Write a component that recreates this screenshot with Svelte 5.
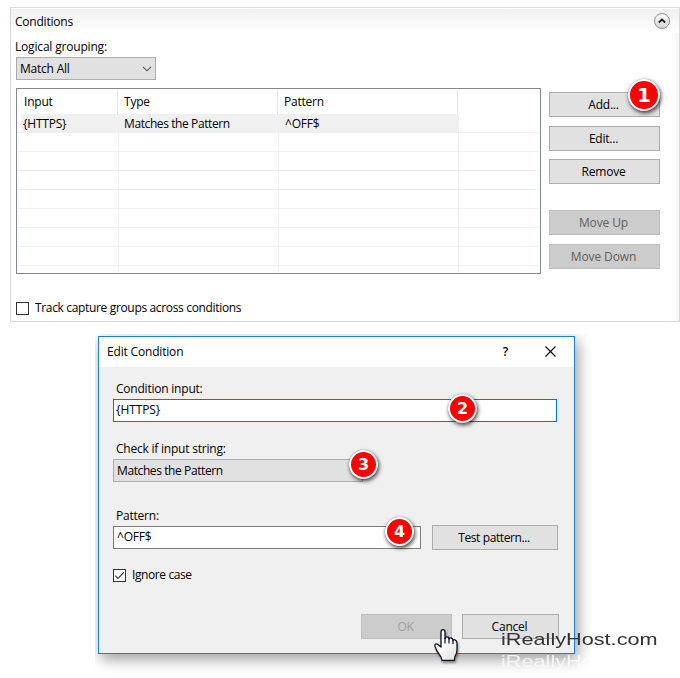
<script>
    // Column titles and rows of the conditions list
    const columns = ['Input', 'Type', 'Pattern', ''];
    const conditions = [
        { input: '{HTTPS}', type: 'Matches the Pattern', pattern: '^OFF$' }
    ];
    // Blank rows keep the grid lines going down to the end of the list
    const emptyRows = [1, 2, 3, 4, 5, 6, 7];

    let track = $state(false);
    let ignoreCase = $state(true);
    let conditionInput = $state('{HTTPS}');
    let pattern = $state('^OFF$');
</script>

<div class="page">
    <section class="panel">
        <header>
            <span>Conditions</span>
            <svg class="collapse" width="18" height="18" viewBox="0 0 18 18">
                <defs>
                    <linearGradient id="round" x1="0" y1="0" x2="0" y2="1">
                        <stop offset="0" stop-color="#fff" />
                        <stop offset="1" stop-color="#d4d4d4" />
                    </linearGradient>
                </defs>
                <circle cx="9" cy="9" r="7.5" fill="url(#round)" stroke="#929292" />
                <path d="M5.8 10.5 L9 7.5 L12.2 10.5" fill="none" stroke="#222" stroke-width="1.9" />
            </svg>
        </header>

        <div class="label grouping">Logical grouping:</div>
        <div class="select">
            <span>Match All</span>
            <svg width="10" height="6" viewBox="0 0 10 6">
                <path d="M1 .8 L5 4.8 L9 .8" fill="none" stroke="#555" stroke-width="1.1" />
            </svg>
        </div>

        <div class="columns">
            <div class="table">
                <div class="row head">
                    {#each columns as column}
                        <div>{column}</div>
                    {/each}
                </div>
                {#each conditions as condition}
                    <div class="row selected">
                        <div>{condition.input}</div>
                        <div class="tight">{condition.type}</div>
                        <div>{condition.pattern}</div>
                        <div></div>
                    </div>
                {/each}
                {#each emptyRows as row}
                    <div class="row"><div></div><div></div><div></div><div></div></div>
                {/each}
                <div class="row last"><div></div><div></div><div></div><div></div></div>
            </div>

            <div class="actions">
                <button>Add...<span class="badge big">1</span></button>
                <button class="edit">Edit...</button>
                <button class="remove">Remove</button>
                <button class="up" disabled>Move Up</button>
                <button class="down" disabled>Move Down</button>
            </div>
        </div>

        <label class="check track">
            <input type="checkbox" bind:checked={track} />
            <span class="box"></span>
            <span>Track capture groups across conditions</span>
        </label>
    </section>

    <div class="stage">
        <div class="dialog">
            <div class="titlebar">
                <span class="title">Edit Condition</span>
                <span class="help">?</span>
                <svg class="close" width="11" height="11" viewBox="0 0 11 11">
                    <path d="M.5 .5 L10.5 10.5 M10.5 .5 L.5 10.5" stroke="#000" stroke-width="1.1" />
                </svg>
            </div>

            <div class="form">
                <div class="label">Condition input:</div>
                <div class="field">
                    <input class="text focus" type="text" bind:value={conditionInput} />
                    <span class="badge two">2</span>
                </div>

                <div class="label second">Check if input string:</div>
                <div class="select matches">
                    <span class="tight">Matches the Pattern</span>
                    <span class="badge three">3</span>
                </div>

                <div class="label third">Pattern:</div>
                <div class="line">
                    <div class="field short">
                        <input class="text" type="text" bind:value={pattern} />
                        <span class="badge four">4</span>
                    </div>
                    <button class="test">Test pattern...</button>
                </div>

                <label class="check ignore">
                    <input type="checkbox" bind:checked={ignoreCase} />
                    <span class="box">
                        {#if ignoreCase}
                            <svg width="11" height="11" viewBox="0 0 11 11">
                                <path d="M1.2 5.6 L4 8.4 L9.8 2.3" fill="none" stroke="#444" stroke-width="1.3" />
                            </svg>
                        {/if}
                    </span>
                    <span>Ignore case</span>
                </label>

                <div class="footer">
                    <button class="ok" disabled>OK</button>
                    <button class="cancel">Cancel</button>
                </div>
            </div>
        </div>
    </div>

    <!-- Hand pointer over the OK button -->
    <svg class="pointer" width="30" height="38" viewBox="0 0 30 38">
        <defs>
            <linearGradient id="hand" x1="0" y1="0" x2="1" y2="1">
                <stop offset=".4" stop-color="#fff" />
                <stop offset="1" stop-color="#ddd" />
            </linearGradient>
        </defs>
        <path
            d="M8 19 V4 Q8 1.6 10 1.6 Q12 1.6 12 4 V10.5 Q12.4 8.6 14 8.8 Q16 9 16 11 Q16.6 9.6 18 10 Q20 10.4 20 12.4 Q20.8 11.2 22 11.8 Q24 12.6 24 15 V22 Q24 25 22.4 27.5 Q21.4 29 21.4 32.4 H9 Q9 29.6 6.2 26.4 Q3.4 22.8 2 18.4 Q1.4 15.8 3.4 15.8 Q5 15.8 6.4 17.8 Z"
            fill="url(#hand)" stroke="#0c1026" stroke-width="1.3" stroke-linejoin="round" />
        <path d="M12 10 V15.5 M16 10.5 V15.5 M20 12 V16" stroke="#0c1026" stroke-width="1.2" fill="none" />
    </svg>

    <div class="watermark">
        <div>iReallyHost.com</div>
        <div class="reflection">iReallyHost.com</div>
    </div>
</div>

<style>
    :global(body) {
        margin: 0;
        background: #fff;
    }

    .page, .page button, .page input {
        font-family: "Open Sans", "Noto Sans", sans-serif;
        font-size: 12px;
        letter-spacing: -0.22px;
        color: #000;
    }

    .page {
        position: relative;
        width: 680px;
        height: 678px;
        overflow: hidden;
        box-sizing: border-box;
        padding-top: 7px;
        line-height: 16px;
    }

    .page * {
        box-sizing: border-box;
    }

    .page .tight {
        letter-spacing: -0.4px;
    }

    .panel {
        margin-left: 10px;
        width: 670px;
        height: 315px;
        border: 1px solid #d9d9d9;
        padding: 1px 5px 0;
        background: #fff;
        box-shadow: inset 1px 1px 0 #fff, inset -9px 0 8px -7px #f0f0f0;
    }

    header {
        display: flex;
        justify-content: space-between;
        align-items: center;
        height: 24px;
        margin: 0 -5px;
        padding: 0 8px 0 4px;
        background: linear-gradient(#f0f0f0, #fff);
    }

    header span {
        padding-top: 2px;
    }

    .label {
        padding-left: 3px;
        height: 16px;
    }

    .grouping {
        padding-left: 0;
        margin: 6px 0 2px -1px;
        letter-spacing: -0.18px;
    }

    .select {
        display: flex;
        justify-content: space-between;
        align-items: center;
        width: 140px;
        height: 23px;
        padding: 0 3px;
        border: 1px solid #adadad;
        background: #e1e1e1;
        position: relative;
    }

    .columns {
        display: flex;
        gap: 8px;
        margin-top: 8px;
    }

    .table {
        width: 525px;
        height: 186px;
        border: 1px solid #828790;
        padding: 1px;
        overflow: hidden;
    }

    .row {
        display: grid;
        grid-template-columns: 101px 160px 180px 1fr;
        height: 19px;
        border-bottom: 1px solid #f0f0f0;
    }

    .row div {
        border-right: 1px solid #f0f0f0;
        padding-left: 5px;
        line-height: 19px;
        white-space: nowrap;
    }

    .row div:last-child {
        border-right: 0;
    }

    .head {
        grid-template-columns: 100px 160px 180px 1fr;
        height: 24px;
        border: 0;
    }

    .head div {
        border-color: #e5e5e5;
        line-height: 23px;
        padding-left: 6px;
    }

    .row div:nth-child(3) {
        padding-left: 6px;
    }

    .selected {
        background: linear-gradient(#f0f0f0, #f0f0f0) 4px 0 / 437px 19px no-repeat;
    }

    .last {
        height: 7px;
        border: 0;
    }

    .actions {
        display: flex;
        flex-direction: column;
        width: 111px;
        padding-top: 4px;
    }

    .page button {
        position: relative;
        height: 25px;
        padding: 0 2px 0 0;
        border: 1px solid #adadad;
        border-radius: 0;
        background: #e1e1e1;
    }

    .page button:disabled {
        border-color: #bfbfbf;
        background: #ccc;
        color: #606060;
    }

    .page .up, .page .down {
        letter-spacing: -0.12px;
    }

    .edit, .down {
        margin-top: 9px;
    }

    .remove {
        margin-top: 8px;
    }

    .up {
        margin-top: 26px;
    }

    .check {
        display: flex;
        align-items: center;
        gap: 6px;
        height: 16px;
    }

    .check input {
        display: none;
    }

    .box {
        width: 13px;
        height: 13px;
        border: 1px solid #333;
        background: #fff;
    }

    .box svg {
        display: block;
    }

    .track {
        margin-top: 26px;
        letter-spacing: -0.34px;
    }

    /* The shadow round the dialog is cut off at the edges of this area */
    .stage {
        width: 496px;
        height: 344px;
        margin: 12px 0 0 95px;
        padding: 2px 0 0 3px;
        overflow: hidden;
    }

    .dialog {
        width: 477px;
        height: 318px;
        border: 1px solid #1883d7;
        background: #f0f0f0;
        box-shadow: 3px 5px 14px rgba(0, 0, 0, .4);
    }

    .titlebar {
        display: flex;
        align-items: center;
        height: 30px;
        padding: 0 18px 0 8px;
        background: #fff;
    }

    .title {
        flex: 1;
        letter-spacing: -0.18px;
    }

    .help {
        margin-right: 37px;
        font-weight: 600;
    }

    .close {
        margin-bottom: 2px;
    }

    .form {
        padding: 14px 14px 0;
    }

    .field {
        position: relative;
        width: 444px;
        margin-top: 2px;
    }

    .short {
        width: 308px;
        margin-top: 1px;
    }

    .page .text {
        display: block;
        width: 100%;
        height: 23px;
        padding: 0 3px 2px;
        border: 1px solid #7a7a7a;
        border-radius: 0;
        background: #fff;
        outline: none;
    }

    .page .focus {
        border-color: #0078d7;
        padding-left: 2px;
        letter-spacing: -0.1px;
    }

    .second {
        margin-top: 19px;
    }

    .matches {
        width: 250px;
        margin-top: 2px;
    }

    .third {
        margin-top: 26px;
    }

    .line {
        display: flex;
        gap: 11px;
        margin-top: 1px;
    }

    .page .test {
        width: 126px;
        letter-spacing: -0.5px;
        letter-spacing: -0.4px;
    }

    .ignore {
        margin-top: 17px;
        letter-spacing: -0.4px;
    }

    .footer {
        display: flex;
        justify-content: flex-end;
        gap: 10px;
        margin: 31px 1px 0 0;
    }

    .ok {
        width: 91px;
    }

    .page .ok:disabled {
        color: #a0a0a0;
    }

    .cancel {
        width: 97px;
    }

    .badge {
        position: absolute;
        width: 29px;
        height: 29px;
        border: 2.5px solid #fff;
        border-radius: 50%;
        background: #f00;
        box-shadow: 1px 2px 4px rgba(0, 0, 0, .75), 0 0 1px rgba(0, 0, 0, .4);
        color: #fff;
        font: bold 16px/25px "DejaVu Sans", sans-serif;
        letter-spacing: 0;
        text-align: center;
        z-index: 1;
    }

    .big {
        width: 32px;
        height: 32px;
        top: -14px;
        left: 78px;
        font-size: 20px;
        line-height: 28px;
    }

    .two {
        left: 335px;
        top: -5px;
    }

    .three {
        left: 235px;
        top: -10px;
    }

    .four {
        left: 272px;
        top: -9px;
    }

    .pointer {
        position: absolute;
        left: 433px;
        top: 628px;
        filter: drop-shadow(1px 2px 1px rgba(0, 0, 0, .4));
    }

    .watermark {
        position: absolute;
        left: 501px;
        top: 630px;
        font: 17px/20px "Liberation Sans", sans-serif;
        letter-spacing: 0;
        color: #333;
        transform: scaleX(1.275);
        transform-origin: 0 0;
    }

    .reflection {
        margin-top: 2px;
        color: #fff;
        -webkit-mask-image: linear-gradient(rgba(0, 0, 0, .9), rgba(0, 0, 0, .5));
        mask-image: linear-gradient(rgba(0, 0, 0, .9), rgba(0, 0, 0, .5));
    }
</style>
